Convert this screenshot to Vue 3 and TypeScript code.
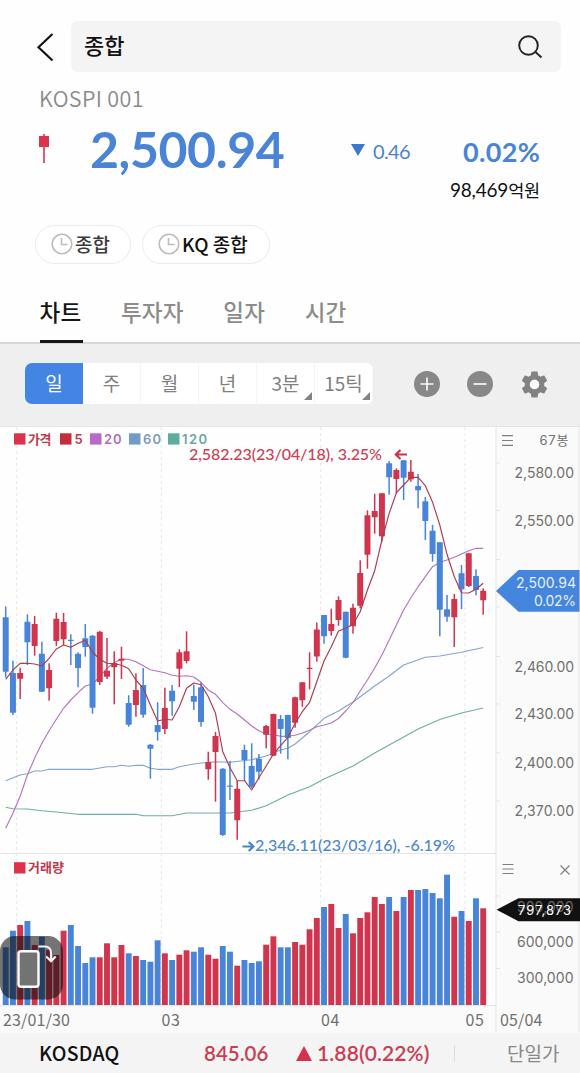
<script setup lang="ts">
type Candle = [up: number, high: number, top: number, bottom: number, low: number, volume: number]

const STEP = 7.235
const FIRST = 5.7
const xAt = (i: number): number => FIRST + i * STEP

// Each entry: rising flag, wick top, body top, body bottom, wick bottom, volume bar top
const candles: Candle[] = [
  [0, 606.5, 617.2, 671.7, 677.5, 947.3], [0, 660.7, 673, 712.7, 715, 930.7], [1, 667.7, 673, 678.7, 699, 925],
  [0, 614.3, 621.7, 642.3, 665, 921], [1, 616, 624, 646, 655.7, 945], [0, 641.7, 653.7, 691.7, 691.7, 936.7],
  [1, 663.3, 670, 688.3, 700.7, 950], [1, 612.7, 618.7, 641, 646, 955], [1, 613, 622, 639.3, 645, 930.7],
  [0, 634.3, 639.8, 641, 665, 925], [0, 652.3, 653.7, 668, 687.3, 946], [0, 624, 638.3, 647, 656.7, 963],
  [0, 635, 635.7, 707.7, 713.7, 957.3], [1, 631, 631.7, 682, 685, 957.3], [1, 638, 670.7, 676.7, 679, 943.3],
  [1, 651.3, 663, 667.3, 704.3, 957.3], [1, 646.7, 658.7, 660.7, 679, 945], [0, 695.3, 703, 724.7, 726.7, 953.3],
  [1, 673.3, 690, 705, 716.7, 956], [0, 668, 685, 714.7, 717.7, 960], [0, 744, 744.7, 748.7, 778.7, 961.7],
  [0, 702.3, 725, 732, 740.7, 940.3], [1, 687.7, 708, 729, 734, 953.3], [0, 685, 690.7, 701.3, 715.7, 960],
  [1, 649.3, 652.3, 668.7, 687, 954.7], [1, 631.3, 651.3, 661, 663.3, 950.3], [0, 684.7, 696, 701.7, 710, 951.7],
  [0, 682.3, 687.3, 722, 726.7, 947.3], [1, 751.7, 762, 769.3, 779.7, 954.7], [1, 732, 736, 752, 801.7, 958.7],
  [0, 768, 768.7, 835, 836, 946], [0, 761, 785.5, 786.7, 800, 951.7], [1, 780.7, 788.7, 820.3, 839.7, 965.7],
  [0, 744.7, 750, 760, 781, 960], [0, 743.3, 766, 786.7, 788.3, 963], [0, 754, 758.7, 771.7, 779.3, 961.3],
  [1, 725, 726, 734.7, 748.3, 944.7], [1, 713.7, 714, 755.7, 755.7, 936.3], [0, 715, 719, 729, 753.7, 947.3],
  [0, 714.7, 715, 738, 759.3, 947.3], [1, 696.7, 697.3, 722.7, 727.7, 942], [1, 682, 682.3, 700.3, 706.7, 944.7],
  [1, 652.3, 667.8, 669, 689.3, 929.3], [1, 622.5, 629.5, 656.5, 661.7, 918], [0, 615, 615, 636.3, 643.7, 907],
  [1, 608.7, 624, 631, 635.7, 904], [1, 596.3, 600, 620, 625.7, 928], [0, 611.7, 611.7, 657.7, 658.3, 914],
  [1, 603.7, 607.7, 626.3, 633.7, 933.3], [1, 560.3, 573, 605.7, 608.3, 918], [1, 510.3, 515.3, 554.7, 568.7, 912.3],
  [1, 493.7, 511, 517.3, 533.7, 897], [1, 493, 493.3, 536.3, 541.7, 904], [0, 461, 463.3, 477.3, 494.7, 897],
  [1, 468.3, 470, 479, 493.3, 911], [0, 460, 460.3, 477.7, 500, 897], [1, 460, 471.7, 479.3, 481.7, 890],
  [0, 474, 486, 490.3, 508.3, 890], [0, 497, 501.3, 521, 540, 889], [0, 525, 530.7, 554, 561.7, 893],
  [0, 542, 542.3, 609.7, 636.3, 898.3], [0, 595, 609.3, 616.7, 621.7, 874.7], [1, 594, 599, 617.3, 647, 916.7],
  [0, 565, 573.3, 589.3, 609, 911], [1, 553, 553.3, 586, 587, 921], [0, 569.3, 576, 590, 595.3, 898.3],
  [1, 588.3, 590.7, 600.3, 614.7, 908.3],
]

interface Average { name: string; color: string; knots: [number, number][] }

const averages: Average[] = [
  {
    name: '120', color: '#6fada5',
    knots: [[0, 807.3], [1, 808.7], [3, 809], [5, 810.7], [7, 812], [10, 814.3], [18, 814.3], [19, 815.7], [23, 815.7], [25, 813],
      [31, 813], [34, 810.3], [36, 805.7], [39, 795], [42, 786.7], [44, 779], [48, 766], [51, 753], [54, 741], [57, 729], [60, 719.5], [63, 713], [66, 708]],
  },
  {
    name: '60', color: '#83a4cb',
    knots: [[0, 780.7], [2, 775], [3, 773.7], [4, 771], [5, 771], [6, 769.3], [12, 769.3], [14, 766.7], [15, 766.7], [16, 765.3],
      [17, 766.3], [18, 765.3], [19, 765.3], [20, 768.3], [21, 769.3], [23, 769.3], [24, 766.7], [26, 764], [28, 762.3], [29, 761.7],
      [31, 762.3], [34, 759.7], [36, 756], [38, 750], [39, 748.3], [40, 744], [42, 731.7], [44, 718.3], [46, 711], [48, 702], [51, 686],
      [53, 676], [55, 665], [58, 657.3], [60, 656], [63, 652.3], [66, 647.5]],
  },
  {
    name: '20', color: '#b376be',
    knots: [828.3, 813.3, 796, 775, 758.3, 743.3, 730.7, 719.3, 708.3, 700, 692.7, 686, 684, 676.7, 668.3, 662.7, 659, 659.3, 661.7,
      665.7, 669.7, 671.3, 672.7, 675.3, 676.3, 675.7, 677, 682.3, 690, 694.3, 702.7, 709.3, 714, 720, 726, 730.7, 734, 734.7, 736.3,
      736.3, 735.3, 733, 730.3, 726.7, 725, 723, 718.5, 711, 702.5, 691, 680, 668, 655, 640, 625, 610, 597.7, 586.7, 576.7, 566.7,
      562.3, 560, 557.3, 554, 550.7, 548.3, 548.3].map((y, i): [number, number] => [i, y]),
  },
  {
    name: '5', color: '#ab3c4d',
    knots: [679.3, 670, 663.3, 663.3, 664, 666, 658.3, 649, 645, 647.3, 643.3, 640.3, 652, 659.3, 663.3, 663.7, 665.3, 668.7, 680,
      688.3, 705, 721, 719.3, 720, 706.7, 688.3, 683, 684.7, 696.7, 713.3, 751.7, 767.7, 780.7, 780.7, 790, 777.7, 766, 754, 745.7,
      737.3, 723.3, 711.7, 702.3, 681.7, 661, 646.7, 631, 628.3, 624.3, 611.7, 590, 570.7, 540, 513.3, 492.7, 485, 477.3, 477.3,
      485.7, 502.3, 525, 554.3, 576.7, 592.7, 593, 589.3, 583.3].map((y, i): [number, number] => [i, y]),
  },
]

const points = (a: Average): string => a.knots.map(([i, y]) => `${xAt(i).toFixed(1)},${y}`).join(' ')

const legend = [
  { label: '가격', color: '#db334b', text: '#bd3a4d', x: 14, tx: 28, w: 23.5 },
  { label: '5', color: '#c72c3e', text: '#bd3a4d', x: 60, tx: 74.5, w: 8.5 },
  { label: '20', color: '#b969c8', text: '#ae70ba', x: 90, tx: 104, w: 17.5 },
  { label: '60', color: '#729bca', text: '#7d9cc2', x: 129, tx: 143, w: 18 },
  { label: '120', color: '#5dac9c', text: '#68a99d', x: 168, tx: 182, w: 25 },
]
const prices: [string, number][] = [
  ['2,580.00', 473], ['2,550.00', 520.7], ['2,460.00', 666.3], ['2,430.00', 714], ['2,400.00', 763], ['2,370.00', 810.5],
]
const ticks = [463, 510.5, 559.5, 607, 656.5, 704, 752.7, 801, 896, 932, 968.5]
const months = [16.7, 161.3, 320.7, 465]
const periods = [
  { label: '일', active: true }, { label: '주' }, { label: '월' }, { label: '년' },
  { label: '3분', more: true }, { label: '15틱', more: true },
]
const tabs = ['차트', '투자자', '일자', '시간']
const recents = ['종합', 'KQ 종합']
</script>

<template>
  <main class="screen">
    <header class="top">
      <svg class="back" width="18" height="30" viewBox="0 0 18 30"><path d="M16.500 2 2.500 15.200 16.500 28.500" /></svg>
      <div class="search">
        <span>종합</span>
        <svg width="26" height="26" viewBox="0 0 26 26"><circle cx="11.500" cy="11.500" r="9.300" /><path d="m18.200 17.700 6.300 5.800" /></svg>
      </div>
    </header>

    <section class="quote">
      <div class="code">KOSPI 001</div>
      <div class="row">
        <svg class="mini" width="12" height="30" viewBox="0 0 12 30"><path d="M5.2 0h1.6v29H5.2z" /><path d="M1 2h10v11H1z" /></svg>
        <strong class="price">2,500.94</strong>
        <span class="change"><i class="down"></i>0.46</span>
        <strong class="rate">0.02%</strong>
      </div>
      <div class="amount">98,469<span>억원</span></div>
    </section>

    <section class="chips">
      <button v-for="(r, i) in recents" :key="r" :class="['chip', { dark: i === 1 }]">
        <svg width="22" height="22" viewBox="0 0 22 22"><circle cx="11" cy="11" r="9.8" /><path d="M10.5 5v6.5h6" /></svg>{{ r }}
      </button>
    </section>

    <nav class="tabs">
      <span v-for="(t, i) in tabs" :key="t" :class="{ on: i === 0 }">{{ t }}</span>
    </nav>

    <section class="tools">
      <div class="periods">
        <span v-for="p in periods" :key="p.label" :class="{ active: p.active }">{{ p.label }}<i v-if="p.more"></i></span>
      </div>
      <svg class="tool plus" width="26" height="26" viewBox="0 0 26 26"><circle cx="13" cy="13" r="13" /><path d="M6.5 13h13M13 6.5v13" /></svg>
      <svg class="tool minus" width="26" height="26" viewBox="0 0 26 26"><circle cx="13" cy="13" r="13" /><path d="M6.5 13h13" /></svg>
      <svg class="gear" width="31" height="31" viewBox="0 0 24 24"><path fill-rule="evenodd" d="M19.43 12.98c.04-.32.07-.64.07-.98s-.03-.66-.07-.98l2.11-1.65c.19-.15.24-.42.12-.64l-2-3.46c-.12-.22-.39-.3-.61-.22l-2.49 1c-.52-.4-1.08-.73-1.69-.98l-.38-2.65A.49.49 0 0 0 14 2h-4c-.25 0-.46.18-.49.42l-.38 2.65c-.61.25-1.17.59-1.69.98l-2.49-1c-.23-.09-.49 0-.61.22l-2 3.46c-.13.22-.07.49.12.64l2.11 1.65c-.04.32-.07.65-.07.98s.03.66.07.98l-2.11 1.65c-.19.15-.24.42-.12.64l2 3.46c.12.22.39.3.61.22l2.49-1c.52.4 1.08.73 1.69.98l.38 2.65c.03.24.24.42.49.42h4c.25 0 .46-.18.49-.42l.38-2.65c.61-.25 1.17-.59 1.69-.98l2.49 1c.23.09.49 0 .61-.22l2-3.46c.12-.22.07-.49-.12-.64l-2.11-1.65zM12 15.6a3.6 3.6 0 1 1 0-7.2 3.6 3.6 0 0 1 0 7.2z" /><circle cx="12" cy="12" r="3.600" fill="#fbfbfb" /></svg>
    </section>

    <svg class="chart" width="580" height="607" viewBox="0 426 580 607">
      <rect x="496" y="426" width="84" height="607" fill="#fafafa" />
      <rect x="0" y="1006" width="580" height="27" fill="#fafafa" />
      <g class="grid">
        <path v-for="m in months" :key="m" :d="`M${m} 427V1005`" />
      </g>
      <path class="rule" d="M0 426.5H580M0 853.5H496M496 426V1032M579 426V1032M0 1005.5H496" />
      <path v-for="t in ticks" :key="t" class="rule" :d="`M496 ${t}h4`" />

      <polyline v-for="a in averages.slice(0, 3)" :key="a.name" class="avg" :stroke="a.color" :points="points(a)" />
      <g v-for="(c, i) in candles" :key="i" :fill="c[0] ? '#d0354d' : '#4885d8'">
        <rect :x="xAt(i) - 0.75" :y="c[1]" width="1.5" :height="c[4] - c[1]" />
        <rect :x="xAt(i) - 3" :y="c[2]" width="6" :height="c[3] - c[2]" rx=".4" />
        <rect :x="xAt(i) - 2.95" :y="c[5]" width="5.9" :height="1005 - c[5]" />
      </g>
      <polyline class="avg" :stroke="averages[3].color" :points="points(averages[3])" />

      <g class="legend">
        <template v-for="l in legend" :key="l.label">
          <rect :x="l.x" y="433.3" width="11.5" height="11.3" :fill="l.color" />
          <text :x="l.tx" y="443.600" :fill="l.text" :textLength="l.w">{{ l.label }}</text>
        </template>
        <rect x="14" y="862.2" width="11.5" height="11.3" fill="#db334b" />
        <text x="28" y="872.3" fill="#bd3a4d" textLength="36">거래량</text>
      </g>

      <text class="note" x="189" y="460" fill="#cf3d51" textLength="193">2,582.23(23/04/18), 3.25%</text>
      <path class="arrow" stroke="#cf3049" d="M407 454.5H396M400.5 450l-4.7 4.5 4.7 4.5" />
      <text class="note" x="255" y="851" fill="#4d87cd" textLength="200">2,346.11(23/03/16), -6.19%</text>
      <path class="arrow" stroke="#4583d0" d="M242.5 846.5H253M248.7 842l4.7 4.5-4.7 4.5" />

      <path class="menu" d="M502 435.6h11M502 440.5h11M502 445.4h11M502.500 864.500h11M502.500 869h11M502.500 873.500h11M560.500 865.500l9 9M569.500 865.500l-9 9" />
      <text class="axis count" x="539.500" y="445" textLength="29">67봉</text>
      <text v-for="p in prices" :key="p[0]" class="axis" x="514.500" :y="p[1] + 5.2" textLength="59.500">{{ p[0] }}</text>
      <path fill="#4485de" d="M496 591 518.500 570H579.500V611.700H518.500z" />
      <text class="axis tag" x="516" y="588" textLength="60">2,500.94</text>
      <text class="axis tag" x="534" y="606" textLength="42">0.02%</text>

      <path fill="#111" d="M496.500 909.700 518.500 898.300H580V921.200H518.500z" />
      <text class="axis ghost" x="517" y="911.500" textLength="56.500">900,000</text>
      <text class="axis vol" x="518" y="914.800" textLength="53">797,873</text>
      <text class="axis" x="517" y="947.300" textLength="56.500">600,000</text>
      <text class="axis" x="517" y="983.300" textLength="56.500">300,000</text>

      <g class="dates">
        <text x="3" y="1026" textLength="67">23/01/30</text>
        <text x="161.500" y="1026" textLength="18.500">03</text>
        <text x="321" y="1026" textLength="18.500">04</text>
        <text x="465.500" y="1026" textLength="18.500">05</text>
        <text x="500" y="1026" textLength="42.500">05/04</text>
      </g>

      <rect x="0" y="936" width="63" height="63.500" rx="15" fill="#0a0a0a" fill-opacity=".57" />
      <rect x="18.500" y="951.200" width="20" height="35.500" rx="2.500" fill="#737373" stroke="#fff" stroke-width="2.400" />
      <path class="turn" d="M38.500 946.500h6c4.500 0 6.500 2 6.500 6.500v7.500M46.300 956.500l4.700 4.700 4.700-4.700" />
    </svg>

    <footer class="ticker">
      <span class="market">KOSDAQ</span>
      <span class="index">845.06</span>
      <i class="up"></i>
      <span class="diff">1.88(0.22%)</span>
      <i class="bar"></i>
      <span class="single">단일가</span>
    </footer>
  </main>
</template>

<style>
body { margin: 0; background: #fefefe; }
</style>

<style scoped>
.screen { width: 580px; height: 1073px; overflow: hidden; background: #fefefe; font-family: "Noto Sans CJK KR", sans-serif; color: #111; }
svg { display: block; flex: none; }
.top { display: flex; align-items: flex-start; padding: 21px 0 0 36px; height: 52px; }
.back { margin-top: 11px; margin-right: 17px; fill: none; stroke: #151515; stroke-width: 2.200; }
.search { width: 490px; height: 51px; box-sizing: border-box; border-radius: 7px; background: #f4f4f4; display: flex; align-items: center; justify-content: space-between; padding: 0 18px 0 13px; font-size: 22px; font-weight: 500; line-height: 46px; }
.search span { height: 51px; }
.search svg { fill: none; stroke: #222; stroke-width: 1.900; margin-top: 1px; }
.quote { height: 152px; }
.code { padding: 13px 0 0 39px; font-size: 21.500px; line-height: 24px; color: #8a8a8a; font-weight: 350; letter-spacing: .35px; }
.row { display: flex; height: 67px; padding-left: 38px; align-items: center; color: #4a84d6; font-family: Lato, sans-serif; }
.mini { fill: #db334b; margin-top: 10px; width: 12px; }
.price { font-size: 50px; margin-left: 40px; width: 194px; line-height: 60px; white-space: nowrap; margin-top: 10px; letter-spacing: -.4px; }
.change { margin-left: 67px; margin-top: 15px; font-size: 20px; display: flex; align-items: center; width: 60px; gap: 8px; letter-spacing: -.6px; }
.down { border: 7px solid transparent; border-top: 12px solid #3c78cf; border-bottom: 0; margin-top: -2px; }
.rate { margin-left: 52px; margin-top: 15px; width: 79px; font-size: 27px; letter-spacing: .35px; white-space: nowrap; }
.amount { text-align: right; padding-right: 40px; font: 19px/26px Lato, sans-serif; letter-spacing: -.2px; }
.amount span { font-family: "Noto Sans CJK KR", sans-serif; font-size: 17.500px; }
.chips { display: flex; gap: 11px; padding-left: 35px; }
.chip { box-sizing: border-box; height: 39px; width: 96px; border: 1.500px solid #ebebeb; border-radius: 20px; background: #fff; font: 500 19px/36px "Noto Sans CJK KR", sans-serif; color: #3b3b3b; display: flex; align-items: center; padding: 0 0 1px 15px; gap: 2px; white-space: nowrap; }
.chip.dark { width: 128px; color: #111; }
.chip svg { fill: none; stroke: #bdbdbd; stroke-width: 1.600; }
.tabs { height: 78px; border-bottom: 2px solid #d7d7d7; display: flex; gap: 39.500px; padding-left: 39.500px; font-size: 22.500px; line-height: 95px; color: #8c8c8c; font-weight: 450; }
.tabs span { position: relative; letter-spacing: .25px; }
.tabs .on { color: #161616; font-weight: 500; }
.tabs .on::after { content: ""; position: absolute; left: 0; width: 43px; top: 76px; height: 3px; background: #161616; }
.tools { height: 82px; background: #efefef; display: flex; padding-left: 25px; }
.periods { margin-top: 19px; width: 348px; height: 41px; border-radius: 7px; overflow: hidden; background: #fff; display: grid; grid-template-columns: repeat(6, 58px); }
.periods span { position: relative; text-align: center; font-size: 19px; line-height: 39px; color: #808080; border-right: 1px solid #f5f5f5; }
.periods .active { background: #4285e3; color: #fff; border-right: 0; }
.periods i { position: absolute; right: 2px; bottom: 4px; border: 4.500px solid #828282; border-top-color: transparent; border-left-color: transparent; }
.tool { margin-top: 27px; fill: #888; stroke: #f7f7f7; stroke-width: 1.700; }
.tool circle { stroke: none; }
.plus { margin-left: 41px; }
.minus { margin-left: 27px; }
.gear { margin: 25px 0 0 26px; fill: #828282; }
.grid { fill: none; stroke: #e8e5ea; stroke-dasharray: 3 3; }
.rule { fill: none; stroke: #e5e5e5; stroke-width: 1; }
.avg { fill: none; stroke-width: 1.150; stroke-linejoin: round; }
.legend { font: 600 13px Inter, "Noto Sans CJK KR", sans-serif; }
.note { font: 500 16px Lato, sans-serif; stroke: currentColor; stroke-width: 0; }
.arrow { fill: none; stroke-width: 2.200; }
.menu { fill: none; stroke: #7f7f7f; stroke-width: 1.200; }
.axis { font: 14px Inter, "Noto Sans CJK KR", sans-serif; fill: #707070; }
.count { font-size: 13px; }
.tag { fill: #e6f1ff; }
.ghost { fill: #666; }
.vol { fill: #fff; font-size: 13px; }
.dates { font: 16px "Noto Sans CJK KR", sans-serif; fill: #707070; }
.turn { fill: none; stroke: #f4f4f4; stroke-width: 2.100; }
.ticker { height: 40px; background: #f4f4f4; display: flex; align-items: center; padding-left: 39px; font: 500 19.500px/38px "Noto Sans CJK KR", sans-serif; white-space: nowrap; }
.market { width: 165px; letter-spacing: .25px; }
.index { width: 92px; color: #cc3d53; font: 600 20.500px/38px Lato, sans-serif; }
.up { border: 8px solid transparent; border-bottom: 15px solid #d8304a; border-top: 0; }
.diff { margin-left: 5px; width: 137px; color: #cc3d53; font: 600 21px/38px Lato, sans-serif; letter-spacing: .1px; }
.bar { width: 1px; height: 17px; background: #ddd; }
.single { margin-left: 52px; color: #888; font-size: 19px; font-weight: 400; }
</style>
